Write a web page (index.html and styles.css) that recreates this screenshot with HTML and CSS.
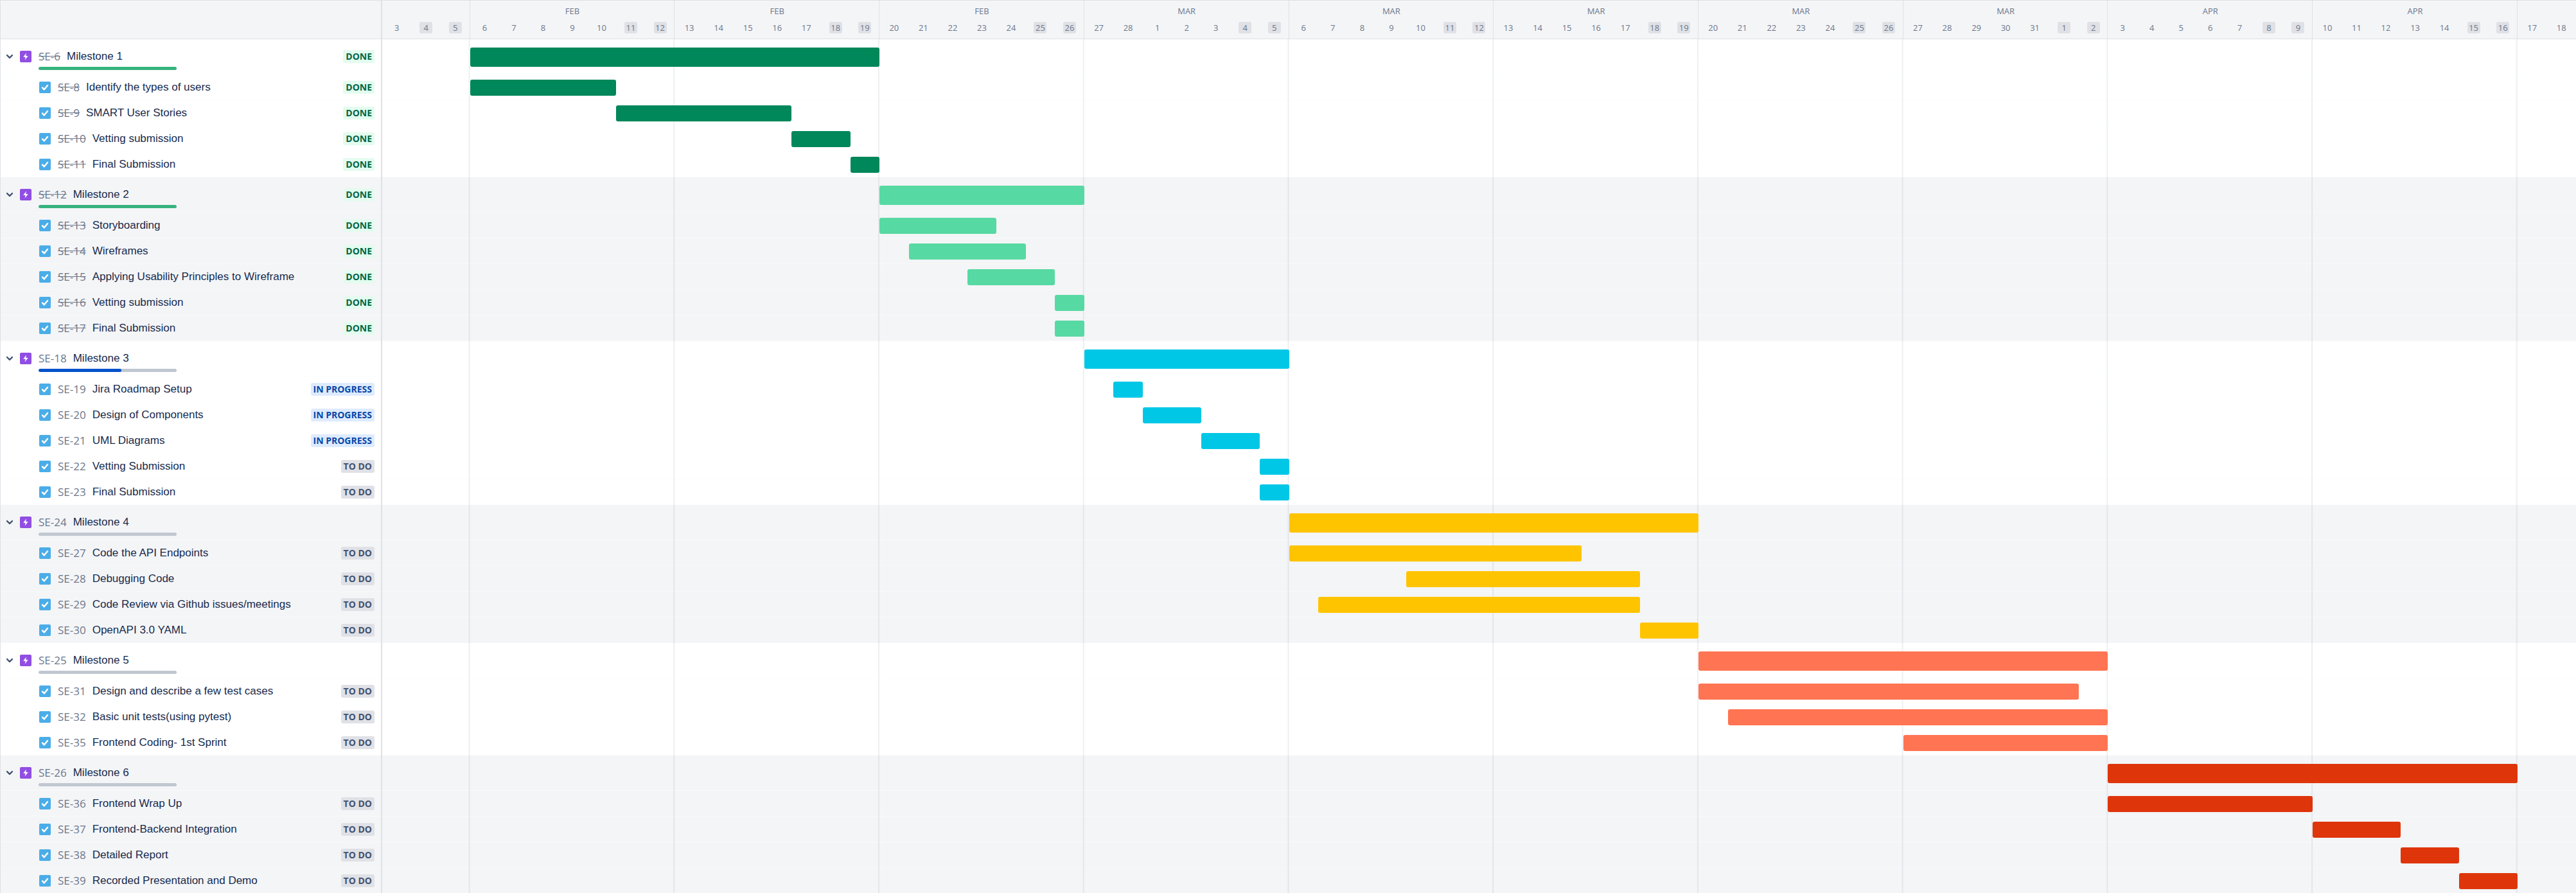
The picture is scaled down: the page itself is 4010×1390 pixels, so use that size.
FILE: index.html
```html
<!DOCTYPE html>
<html lang="en">
<head>
<meta charset="utf-8">
<title>Roadmap</title>
<link rel="stylesheet" href="styles.css">
</head>
<body>
<svg class="sprite" aria-hidden="true">
  <symbol id="epic" viewBox="0 0 18 18"><rect width="18" height="18" rx="2" fill="#904ee2"/><path d="M9.9 3.6 5.2 9.8h3.4l-.9 4.7 5-6.5H9.2z" fill="#fff"/></symbol>
  <symbol id="task" viewBox="0 0 18 18"><rect width="18" height="18" rx="2" fill="#4bade8"/><path d="m5 9.4 2.8 2.9L13 5.9" fill="none" stroke="#fff" stroke-width="2.4" stroke-linecap="round" stroke-linejoin="round"/></symbol>
  <symbol id="chevron" viewBox="0 0 12 8"><path d="m2 2 4 4 4-4" fill="none" stroke="#42526e" stroke-width="2.4" stroke-linecap="round" stroke-linejoin="round"/></symbol>
</svg>
<main class="roadmap">
  <header class="header">
    <div class="corner"></div>
    <ol class="weeks">
      <li class="week" style="flex-grow:3"><span class="month"></span><ol class="days"><li>3</li><li class="off">4</li><li class="off">5</li></ol></li>
      <li class="week" style="flex-grow:7"><span class="month">FEB</span><ol class="days"><li>6</li><li>7</li><li>8</li><li>9</li><li>10</li><li class="off">11</li><li class="off">12</li></ol></li>
      <li class="week" style="flex-grow:7"><span class="month">FEB</span><ol class="days"><li>13</li><li>14</li><li>15</li><li>16</li><li>17</li><li class="off">18</li><li class="off">19</li></ol></li>
      <li class="week" style="flex-grow:7"><span class="month">FEB</span><ol class="days"><li>20</li><li>21</li><li>22</li><li>23</li><li>24</li><li class="off">25</li><li class="off">26</li></ol></li>
      <li class="week" style="flex-grow:7"><span class="month">MAR</span><ol class="days"><li>27</li><li>28</li><li>1</li><li>2</li><li>3</li><li class="off">4</li><li class="off">5</li></ol></li>
      <li class="week" style="flex-grow:7"><span class="month">MAR</span><ol class="days"><li>6</li><li>7</li><li>8</li><li>9</li><li>10</li><li class="off">11</li><li class="off">12</li></ol></li>
      <li class="week" style="flex-grow:7"><span class="month">MAR</span><ol class="days"><li>13</li><li>14</li><li>15</li><li>16</li><li>17</li><li class="off">18</li><li class="off">19</li></ol></li>
      <li class="week" style="flex-grow:7"><span class="month">MAR</span><ol class="days"><li>20</li><li>21</li><li>22</li><li>23</li><li>24</li><li class="off">25</li><li class="off">26</li></ol></li>
      <li class="week" style="flex-grow:7"><span class="month">MAR</span><ol class="days"><li>27</li><li>28</li><li>29</li><li>30</li><li>31</li><li class="off">1</li><li class="off">2</li></ol></li>
      <li class="week" style="flex-grow:7"><span class="month">APR</span><ol class="days"><li>3</li><li>4</li><li>5</li><li>6</li><li>7</li><li class="off">8</li><li class="off">9</li></ol></li>
      <li class="week" style="flex-grow:7"><span class="month">APR</span><ol class="days"><li>10</li><li>11</li><li>12</li><li>13</li><li>14</li><li class="off">15</li><li class="off">16</li></ol></li>
      <li class="week" style="flex-grow:2"><span class="month"></span><ol class="days"><li>17</li><li>18</li></ol></li>
    </ol>
  </header>

  <section class="group green closed">
    <div class="row epic"><div class="item"><button class="toggle" aria-label="Collapse Milestone 1"><svg><use href="#chevron"/></svg></button><svg class="type"><use href="#epic"/></svg><a class="key" href="#SE-6">SE-6</a><span class="title">Milestone 1</span><span class="status done">DONE</span><div class="progress"><div class="fill complete" style="width:100%"></div></div></div><div class="track"><div class="bar" style="grid-column:4/18"></div></div></div>
    <div class="row"><div class="item"><svg class="type"><use href="#task"/></svg><a class="key" href="#SE-8">SE-8</a><span class="title">Identify the types of users</span><span class="status done">DONE</span></div><div class="track"><div class="bar" style="grid-column:4/9"></div></div></div>
    <div class="row"><div class="item"><svg class="type"><use href="#task"/></svg><a class="key" href="#SE-9">SE-9</a><span class="title">SMART User Stories</span><span class="status done">DONE</span></div><div class="track"><div class="bar" style="grid-column:9/15"></div></div></div>
    <div class="row"><div class="item"><svg class="type"><use href="#task"/></svg><a class="key" href="#SE-10">SE-10</a><span class="title">Vetting submission</span><span class="status done">DONE</span></div><div class="track"><div class="bar" style="grid-column:15/17"></div></div></div>
    <div class="row"><div class="item"><svg class="type"><use href="#task"/></svg><a class="key" href="#SE-11">SE-11</a><span class="title">Final Submission</span><span class="status done">DONE</span></div><div class="track"><div class="bar" style="grid-column:17/18"></div></div></div>
  </section>

  <section class="group mint closed">
    <div class="row epic"><div class="item"><button class="toggle" aria-label="Collapse Milestone 2"><svg><use href="#chevron"/></svg></button><svg class="type"><use href="#epic"/></svg><a class="key" href="#SE-12">SE-12</a><span class="title">Milestone 2</span><span class="status done">DONE</span><div class="progress"><div class="fill complete" style="width:100%"></div></div></div><div class="track"><div class="bar" style="grid-column:18/25"></div></div></div>
    <div class="row"><div class="item"><svg class="type"><use href="#task"/></svg><a class="key" href="#SE-13">SE-13</a><span class="title">Storyboarding</span><span class="status done">DONE</span></div><div class="track"><div class="bar" style="grid-column:18/22"></div></div></div>
    <div class="row"><div class="item"><svg class="type"><use href="#task"/></svg><a class="key" href="#SE-14">SE-14</a><span class="title">Wireframes</span><span class="status done">DONE</span></div><div class="track"><div class="bar" style="grid-column:19/23"></div></div></div>
    <div class="row"><div class="item"><svg class="type"><use href="#task"/></svg><a class="key" href="#SE-15">SE-15</a><span class="title">Applying Usability Principles to Wireframe</span><span class="status done">DONE</span></div><div class="track"><div class="bar" style="grid-column:21/24"></div></div></div>
    <div class="row"><div class="item"><svg class="type"><use href="#task"/></svg><a class="key" href="#SE-16">SE-16</a><span class="title">Vetting submission</span><span class="status done">DONE</span></div><div class="track"><div class="bar" style="grid-column:24/25"></div></div></div>
    <div class="row"><div class="item"><svg class="type"><use href="#task"/></svg><a class="key" href="#SE-17">SE-17</a><span class="title">Final Submission</span><span class="status done">DONE</span></div><div class="track"><div class="bar" style="grid-column:24/25"></div></div></div>
  </section>

  <section class="group cyan">
    <div class="row epic"><div class="item"><button class="toggle" aria-label="Collapse Milestone 3"><svg><use href="#chevron"/></svg></button><svg class="type"><use href="#epic"/></svg><a class="key" href="#SE-18">SE-18</a><span class="title">Milestone 3</span><div class="progress"><div class="fill" style="width:60%"></div></div></div><div class="track"><div class="bar" style="grid-column:25/32"></div></div></div>
    <div class="row"><div class="item"><svg class="type"><use href="#task"/></svg><a class="key" href="#SE-19">SE-19</a><span class="title">Jira Roadmap Setup</span><span class="status active">IN PROGRESS</span></div><div class="track"><div class="bar" style="grid-column:26/27"></div></div></div>
    <div class="row"><div class="item"><svg class="type"><use href="#task"/></svg><a class="key" href="#SE-20">SE-20</a><span class="title">Design of Components</span><span class="status active">IN PROGRESS</span></div><div class="track"><div class="bar" style="grid-column:27/29"></div></div></div>
    <div class="row"><div class="item"><svg class="type"><use href="#task"/></svg><a class="key" href="#SE-21">SE-21</a><span class="title">UML Diagrams</span><span class="status active">IN PROGRESS</span></div><div class="track"><div class="bar" style="grid-column:29/31"></div></div></div>
    <div class="row"><div class="item"><svg class="type"><use href="#task"/></svg><a class="key" href="#SE-22">SE-22</a><span class="title">Vetting Submission</span><span class="status">TO DO</span></div><div class="track"><div class="bar" style="grid-column:31/32"></div></div></div>
    <div class="row"><div class="item"><svg class="type"><use href="#task"/></svg><a class="key" href="#SE-23">SE-23</a><span class="title">Final Submission</span><span class="status">TO DO</span></div><div class="track"><div class="bar" style="grid-column:31/32"></div></div></div>
  </section>

  <section class="group yellow">
    <div class="row epic"><div class="item"><button class="toggle" aria-label="Collapse Milestone 4"><svg><use href="#chevron"/></svg></button><svg class="type"><use href="#epic"/></svg><a class="key" href="#SE-24">SE-24</a><span class="title">Milestone 4</span><div class="progress"></div></div><div class="track"><div class="bar" style="grid-column:32/46"></div></div></div>
    <div class="row"><div class="item"><svg class="type"><use href="#task"/></svg><a class="key" href="#SE-27">SE-27</a><span class="title">Code the API Endpoints</span><span class="status">TO DO</span></div><div class="track"><div class="bar" style="grid-column:32/42"></div></div></div>
    <div class="row"><div class="item"><svg class="type"><use href="#task"/></svg><a class="key" href="#SE-28">SE-28</a><span class="title">Debugging Code</span><span class="status">TO DO</span></div><div class="track"><div class="bar" style="grid-column:36/44"></div></div></div>
    <div class="row"><div class="item"><svg class="type"><use href="#task"/></svg><a class="key" href="#SE-29">SE-29</a><span class="title">Code Review via Github issues/meetings</span><span class="status">TO DO</span></div><div class="track"><div class="bar" style="grid-column:33/44"></div></div></div>
    <div class="row"><div class="item"><svg class="type"><use href="#task"/></svg><a class="key" href="#SE-30">SE-30</a><span class="title">OpenAPI 3.0 YAML</span><span class="status">TO DO</span></div><div class="track"><div class="bar" style="grid-column:44/46"></div></div></div>
  </section>

  <section class="group coral">
    <div class="row epic"><div class="item"><button class="toggle" aria-label="Collapse Milestone 5"><svg><use href="#chevron"/></svg></button><svg class="type"><use href="#epic"/></svg><a class="key" href="#SE-25">SE-25</a><span class="title">Milestone 5</span><div class="progress"></div></div><div class="track"><div class="bar" style="grid-column:46/60"></div></div></div>
    <div class="row"><div class="item"><svg class="type"><use href="#task"/></svg><a class="key" href="#SE-31">SE-31</a><span class="title">Design and describe a few test cases</span><span class="status">TO DO</span></div><div class="track"><div class="bar" style="grid-column:46/59"></div></div></div>
    <div class="row"><div class="item"><svg class="type"><use href="#task"/></svg><a class="key" href="#SE-32">SE-32</a><span class="title">Basic unit tests(using pytest)</span><span class="status">TO DO</span></div><div class="track"><div class="bar" style="grid-column:47/60"></div></div></div>
    <div class="row"><div class="item"><svg class="type"><use href="#task"/></svg><a class="key" href="#SE-35">SE-35</a><span class="title">Frontend Coding- 1st Sprint</span><span class="status">TO DO</span></div><div class="track"><div class="bar" style="grid-column:53/60"></div></div></div>
  </section>

  <section class="group red">
    <div class="row epic"><div class="item"><button class="toggle" aria-label="Collapse Milestone 6"><svg><use href="#chevron"/></svg></button><svg class="type"><use href="#epic"/></svg><a class="key" href="#SE-26">SE-26</a><span class="title">Milestone 6</span><div class="progress"></div></div><div class="track"><div class="bar" style="grid-column:60/74"></div></div></div>
    <div class="row"><div class="item"><svg class="type"><use href="#task"/></svg><a class="key" href="#SE-36">SE-36</a><span class="title">Frontend Wrap Up</span><span class="status">TO DO</span></div><div class="track"><div class="bar" style="grid-column:60/67"></div></div></div>
    <div class="row"><div class="item"><svg class="type"><use href="#task"/></svg><a class="key" href="#SE-37">SE-37</a><span class="title">Frontend-Backend Integration</span><span class="status">TO DO</span></div><div class="track"><div class="bar" style="grid-column:67/70"></div></div></div>
    <div class="row"><div class="item"><svg class="type"><use href="#task"/></svg><a class="key" href="#SE-38">SE-38</a><span class="title">Detailed Report</span><span class="status">TO DO</span></div><div class="track"><div class="bar" style="grid-column:70/72"></div></div></div>
    <div class="row"><div class="item"><svg class="type"><use href="#task"/></svg><a class="key" href="#SE-39">SE-39</a><span class="title">Recorded Presentation and Demo</span><span class="status">TO DO</span></div><div class="track"><div class="bar" style="grid-column:72/74"></div></div></div>
  </section>
</main>
</body>
</html>
```
FILE: styles.css
```css
* { box-sizing: border-box; }

body {
  margin: 0;
  background: #fff;
  color: #172b4d;
  font: 17px/24px "Liberation Sans", Arial, sans-serif;
}

ol { margin: 0; padding: 0; list-style: none; }

.sprite { display: none; }

.roadmap {
  --line: #dfe1e6;
  --side: 595px;
  overflow: hidden;
  border-left: 1px solid var(--line);
}

/* Header */
.header {
  display: flex;
  height: 61px;
  background: #f4f5f7;
  border-top: 1px solid var(--line);
  border-bottom: 1px solid var(--line);
}

.corner {
  flex: none;
  width: calc(var(--side) - 1px);
  border-right: 2px solid var(--line);
}

.weeks { display: flex; flex: 1; }

.week {
  display: flex;
  flex: 1 1 0;
  flex-direction: column;
  justify-content: space-between;
  padding: 6px 0 8px;
  color: #6b778c;
  font: 13px/20px "Open Sans", "Noto Sans", sans-serif;
  text-align: center;
}

.week + .week { box-shadow: -1px 0 var(--line); }

.month { height: 20px; }

.days {
  display: grid;
  grid-auto-flow: column;
  grid-auto-columns: minmax(0, 1fr);
  line-height: 18px;
}

.off {
  justify-self: center;
  width: 20px;
  border-radius: 3px;
  background: var(--line);
}

/* Groups and rows */
.group:nth-of-type(even) { background: #f4f5f7; }

.row {
  display: flex;
  height: 40px;
  box-shadow: inset 0 -1px rgba(250, 251, 252, .6);
}

.row.epic { height: 55px; }

.item {
  display: flex;
  flex: none;
  flex-wrap: wrap;
  align-items: center;
  align-content: center;
  width: calc(var(--side) - 1px);
  padding: 0 10px 0 60px;
  border-right: 2px solid var(--line);
}

.epic .item { padding: 15px 10px 0 8px; align-content: flex-start; }

.toggle {
  display: flex;
  width: 22px;
  padding: 0;
  border: 0;
  background: none;
}

.toggle svg { width: 12px; height: 8px; }

.type { width: 18px; height: 18px; margin-right: 11px; }

.key {
  margin-right: 10px;
  color: #6b778c;
  font: 17px/24px "Open Sans", "Noto Sans", sans-serif;
  text-decoration: none;
}

.closed .key { text-decoration: line-through; }

.status {
  margin-left: auto;
  padding: 0 4px;
  border-radius: 3px;
  background: var(--line);
  color: #42526e;
  font: bold 14px/20px "Open Sans", "Noto Sans", sans-serif;
}

.status.done { background: #e3fcef; color: #006644; }
.status.active { background: #deebff; color: #0747a6; }

.progress {
  width: 215px;
  height: 5px;
  margin: 4px 200px 0 51px;
  border-radius: 3px;
  background: #c1c7d0;
  overflow: hidden;
}

.fill { height: 100%; border-radius: 3px; background: #0052cc; }
.fill.complete { background: #36b37e; }

/* Timeline: the backdrop tile is one week wide, shifted by the three leading days */
.track {
  display: grid;
  flex: 1;
  grid-template-columns: repeat(75, minmax(0, 1fr));
  align-items: center;
  background-image: linear-gradient(to left, rgba(9, 30, 66, .07) 2px, transparent 2px);
  background-position: calc(100% * 3 / 68) 0;
  background-size: calc(100% * 7 / 75) 100%;
}

.bar { height: 25px; border-radius: 3px; background: var(--bar); }
.epic .bar { height: 30px; }

.green { --bar: #00875a; }
.mint { --bar: #57d9a3; }
.cyan { --bar: #00c7e6; }
.yellow { --bar: #ffc400; }
.coral { --bar: #ff7452; }
.red { --bar: #de350b; }
```
